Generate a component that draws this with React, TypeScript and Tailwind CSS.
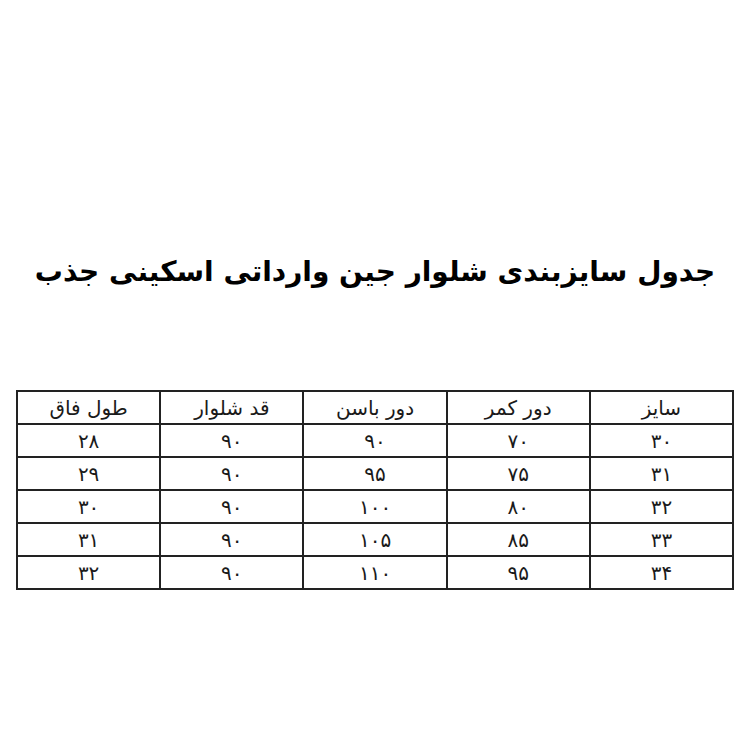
const headers = ['سایز', 'دور کمر', 'دور باسن', 'قد شلوار', 'طول فاق'];

const rows = [
  ['۳۰', '۷۰', '۹۰', '۹۰', '۲۸'],
  ['۳۱', '۷۵', '۹۵', '۹۰', '۲۹'],
  ['۳۲', '۸۰', '۱۰۰', '۹۰', '۳۰'],
  ['۳۳', '۸۵', '۱۰۵', '۹۰', '۳۱'],
  ['۳۴', '۹۵', '۱۱۰', '۹۰', '۳۲'],
];

export default function App() {
  return (
    <div className="w-[750px] h-[750px] bg-white flex flex-col items-center font-['DejaVu_Sans',sans-serif] text-[#1a1a1a]" dir="rtl">
      <h1 className="mt-[250px] h-[44px] whitespace-nowrap text-[28px] font-bold leading-[44px] text-black">
        جدول سایزبندی شلوار جین وارداتی اسکینی جذب
      </h1>

      <table className="mt-[96px] w-[718px] border-collapse border-2 border-[#222] table-fixed">
        <thead>
          <tr>
            {headers.map(h => (
              <th key={h} className="h-[33px] border-2 border-[#222] text-[20px] font-normal leading-none">
                {h}
              </th>
            ))}
          </tr>
        </thead>
        <tbody>
          {rows.map((r, i) => (
            <tr key={i}>
              {r.map((c, j) => (
                <td key={j} className="h-[33px] border-2 border-[#222] text-center text-[20px] leading-none">
                  {c}
                </td>
              ))}
            </tr>
          ))}
        </tbody>
      </table>
    </div>
  );
}
